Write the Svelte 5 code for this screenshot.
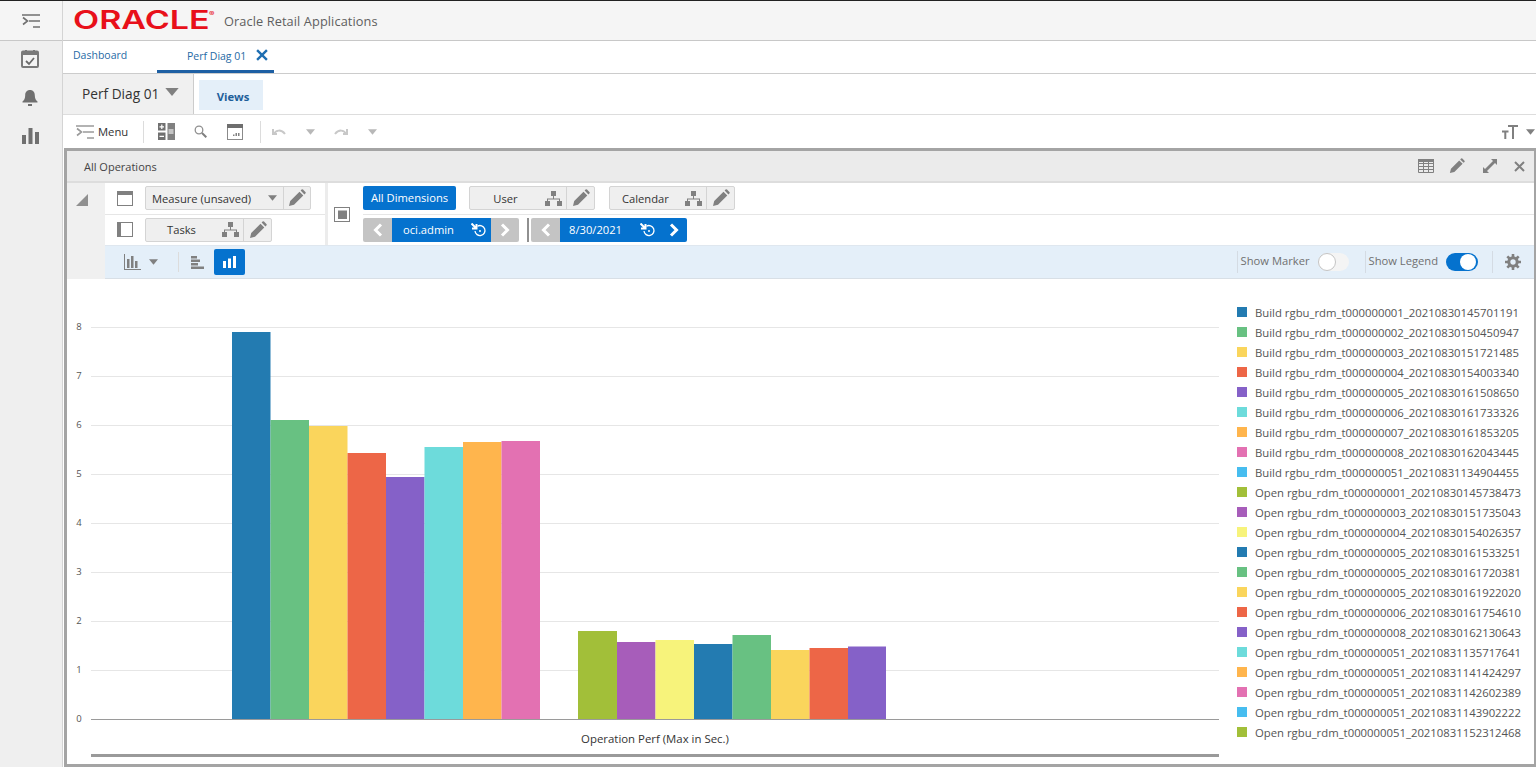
<script>
  const gridLines = [8,7,6,5,4,3,2,1].map((v,i)=>({v, y:327+i*49}));
  const bars = [
    [232,38.5,332,'#237bb1'],[270.5,38.5,420,'#68c182'],[309,38.5,426,'#fad55c'],[347.5,38.5,453,'#ed6647'],
    [386,38.5,477,'#8561c8'],[424.5,38.5,447,'#6ddbdb'],[463,38.5,442,'#ffb54d'],[501.5,38.5,441,'#e371b2'],
    [578,39,631,'#a2bf39'],[617,38.5,642,'#a75dba'],[655.5,38.5,640,'#f7f37b'],[694,38.5,644,'#237bb1'],
    [732.5,38.5,635,'#68c182'],[771,38.5,650,'#fad55c'],[809.5,38.5,648,'#ed6647'],[848,38,646.5,'#8561c8']
  ];
  const legend = [
    ['#237bb1','Build rgbu_rdm_t000000001_20210830145701191'],
    ['#68c182','Build rgbu_rdm_t000000002_20210830150450947'],
    ['#fad55c','Build rgbu_rdm_t000000003_20210830151721485'],
    ['#ed6647','Build rgbu_rdm_t000000004_20210830154003340'],
    ['#8561c8','Build rgbu_rdm_t000000005_20210830161508650'],
    ['#6ddbdb','Build rgbu_rdm_t000000006_20210830161733326'],
    ['#ffb54d','Build rgbu_rdm_t000000007_20210830161853205'],
    ['#e371b2','Build rgbu_rdm_t000000008_20210830162043445'],
    ['#47bdef','Build rgbu_rdm_t000000051_20210831134904455'],
    ['#a2bf39','Open rgbu_rdm_t000000001_20210830145738473'],
    ['#a75dba','Open rgbu_rdm_t000000003_20210830151735043'],
    ['#f7f37b','Open rgbu_rdm_t000000004_20210830154026357'],
    ['#237bb1','Open rgbu_rdm_t000000005_20210830161533251'],
    ['#68c182','Open rgbu_rdm_t000000005_20210830161720381'],
    ['#fad55c','Open rgbu_rdm_t000000005_20210830161922020'],
    ['#ed6647','Open rgbu_rdm_t000000006_20210830161754610'],
    ['#8561c8','Open rgbu_rdm_t000000008_20210830162130643'],
    ['#6ddbdb','Open rgbu_rdm_t000000051_20210831135717641'],
    ['#ffb54d','Open rgbu_rdm_t000000051_20210831141424297'],
    ['#e371b2','Open rgbu_rdm_t000000051_20210831142602389'],
    ['#47bdef','Open rgbu_rdm_t000000051_20210831143902222'],
    ['#a2bf39','Open rgbu_rdm_t000000051_20210831152312468']
  ];
</script>

{#snippet pencil(size = 18, color = '#808080')}
  <svg width={size} height={size} viewBox="0 0 18 18" fill={color}><path d="M1 17l1.2-5L11.5 2.700l3.800 3.800L6 15.800zM12.600 1.600l1-1a1 1 0 0 1 1.400 0l2.400 2.400a1 1 0 0 1 0 1.400l-1 1z"/></svg>
{/snippet}
{#snippet tree()}
  <svg width="17" height="15" viewBox="0 0 17 15" fill="#808080"><rect x="6" y="0" width="5" height="5"/><rect x="0" y="10" width="5" height="5"/><rect x="12" y="10" width="5" height="5"/><path d="M8 5h1v2.500h6V10h-1V8.500H3V10H2V7.500h6z"/></svg>
{/snippet}
{#snippet menuIcon(color)}
  <svg width="18" height="14" viewBox="0 0 18 14" fill="none" stroke={color} stroke-width="1.600"><path d="M0 1h18M7 7h11M11 13h7M1 3.500l4.500 3.500L1 10.500"/></svg>
{/snippet}
{#snippet chevL()}
  <svg width="10" height="14" viewBox="0 0 10 14" fill="none" stroke="#fff" stroke-width="3"><path d="M8 1.500L2.500 7 8 12.500"/></svg>
{/snippet}
{#snippet chevR()}
  <svg width="10" height="14" viewBox="0 0 10 14" fill="none" stroke="#fff" stroke-width="3"><path d="M2 1.500L7.500 7 2 12.500"/></svg>
{/snippet}
{#snippet reset()}
  <svg width="16" height="15" viewBox="0 0 16 15" fill="none" stroke="#fff"><path d="M6.500 3.200A5 5 0 1 1 4 8" stroke-width="1.300"/><circle cx="9" cy="8" r="1" fill="#fff" stroke="none"/><path d="M0.500 0.500L5.500 5.500M1 5.500h4.500V1" stroke-width="2"/></svg>
{/snippet}
{#snippet caret(w = 10, h = 6, color = '#808080')}
  <svg width={w} height={h} viewBox="0 0 10 6" fill={color}><path d="M0 0h10L5 6z"/></svg>
{/snippet}

<div class="page">
  <aside class="rail">
    <div class="rail-top">{@render menuIcon('#707070')}</div>
    <div class="rail-icons">
      <svg width="18" height="18" viewBox="0 0 18 18"><rect x="1" y="1.500" width="16" height="15.500" rx="1" fill="#f4f4f4" stroke="#7a7a7a" stroke-width="2"/><rect x="1" y="1" width="16" height="4" fill="#7a7a7a"/><rect x="4" y="0" width="2" height="2" fill="#7a7a7a"/><rect x="12" y="0" width="2" height="2" fill="#7a7a7a"/><path d="M5 11l3 3 5-6" fill="none" stroke="#6a6a6a" stroke-width="1.800"/></svg>
      <svg width="16" height="18" viewBox="0 0 16 18" fill="#707070"><path d="M8 1c3 0 4.800 2.200 4.800 5.200 0 3.500 1.200 5 2.700 6.300v1H.5v-1C2 11.200 3.200 9.700 3.200 6.200 3.200 3.200 5 1 8 1z"/><rect x="6" y="15" width="4" height="2"/></svg>
      <svg width="17" height="16" viewBox="0 0 17 16" fill="#707070"><rect x="0" y="7" width="4" height="9"/><rect x="6.500" y="0" width="4" height="16"/><rect x="13" y="4" width="4" height="12"/></svg>
    </div>
  </aside>

  <main class="main">
    <header class="brand">
      <span class="logo">ORACLE<sup>®</sup></span>
      <span class="app-name">Oracle Retail Applications</span>
    </header>

    <nav class="tabs">
      <span class="tab">Dashboard</span>
      <span class="tab active">Perf Diag 01
        <svg width="12" height="12" viewBox="0 0 11 11" stroke="#1f6fb2" stroke-width="2.200"><path d="M1 1l9 9M10 1l-9 9"/></svg>
      </span>
    </nav>

    <div class="titlebar">
      <div class="title-cell"><span>Perf Diag 01</span><span class="title-caret">{@render caret(14, 8)}</span></div>
      <div class="views">Views</div>
    </div>

    <div class="toolbar">
      <span class="tool-menu">{@render menuIcon('#9a9a9a')}<span>Menu</span></span>
      <i class="sep"></i>
      <svg class="t-split" width="17" height="17" viewBox="0 0 17 17"><rect x="0" y="0" width="7.500" height="7.500" fill="#707070"/><rect x="0" y="9.500" width="7.500" height="7.500" fill="#707070"/><rect x="9.500" y="0" width="7.500" height="17" fill="#808080"/><rect x="10.500" y="6" width="5" height="5" fill="#c4c4c4"/><path d="M1.500 3.800h4.500M3.800 1.500v4.500M1.500 13.300h4.500" stroke="#fff" stroke-width="1.200"/></svg>
      <svg class="t-search" width="13" height="13" viewBox="0 0 13 13" fill="none"><circle cx="5" cy="5" r="3.800" stroke="#909090" stroke-width="1.300"/><path d="M8 8l4.300 4.300" stroke="#808080" stroke-width="2"/></svg>
      <svg class="t-cal" width="16" height="16" viewBox="0 0 16 16"><rect x=".5" y=".5" width="15" height="15" fill="#fff" stroke="#8a8a8a"/><rect x="0" y="0" width="16" height="4" fill="#6e6e6e"/><path d="M6 12h1.500v-1.500H6zM8.500 12H10V9H8.500zM11 12h1.500V9H11z" fill="#808080"/></svg>
      <i class="sep sep2"></i>
      <svg class="t-undo" width="14" height="8" viewBox="0 0 14 8" fill="none" stroke="#c8c8c8" stroke-width="2"><path d="M2 6c2-4 7-5 11 0"/><path d="M1 1v5h4"/></svg>
      <span class="t-c1">{@render caret(9, 6, '#b8b8b8')}</span>
      <svg class="t-redo" width="14" height="8" viewBox="0 0 14 8" fill="none" stroke="#c8c8c8" stroke-width="2"><path d="M12 6C10 2 5 1 1 6"/><path d="M13 1v5H9"/></svg>
      <span class="t-c2">{@render caret(9, 6, '#b8b8b8')}</span>
      <span class="tool-right">
        <svg width="16" height="14" viewBox="0 0 16 14" fill="none" stroke="#808080"><path d="M0 6.500h6.500M3.300 6.500V14M6 1h10M11 1v13" stroke-width="2"/></svg>
        {@render caret(9, 6, '#808080')}
      </span>
    </div>

    <section class="panel">
      <div class="panel-head">
        <span>All Operations</span>
        <span class="head-icons">
          <svg width="16" height="14" viewBox="0 0 16 14" fill="none" stroke="#808080"><path d="M.5.500h15v13H.5zM.5 4.500h15M.5 7.500h15M.5 10.500h15M5.500 .5v13M10.500 .5v13"/><rect x="0" y="0" width="16" height="3" fill="#808080" stroke="none"/></svg>
          {@render pencil(16)}
          <svg width="16" height="16" viewBox="0 0 16 16" fill="#808080"><path d="M9 1h6v6l-2-2-8 8 2 2H1V9l2 2 8-8z"/></svg>
          <svg width="11" height="11" viewBox="0 0 11 11" stroke="#808080" stroke-width="2"><path d="M1 1l9 9M10 1l-9 9"/></svg>
        </span>
      </div>

      <div class="pov">
        <div class="gutter">
          <svg width="12" height="12" viewBox="0 0 12 12" fill="#909090"><path d="M12 0v12H0z"/></svg>
        </div>
        <div class="pov-main">
          <div class="edges">
            <div class="edge-col">
              <div class="edge-row">
                <svg class="layout-ic" width="16" height="15" viewBox="0 0 16 15"><rect x=".5" y=".5" width="15" height="14" fill="#fff" stroke="#808080"/><rect x="1" y="1" width="14" height="3" fill="#808080"/></svg>
                <div class="chip c-measure"><span class="chip-label">Measure (unsaved)</span><span class="chip-caret">{@render caret(9, 6)}</span><span class="chip-pen">{@render pencil()}</span></div>
              </div>
              <div class="edge-row">
                <svg class="layout-ic" width="16" height="15" viewBox="0 0 16 15"><rect x=".5" y=".5" width="15" height="14" fill="#fff" stroke="#808080"/><rect x="1" y="1" width="3" height="13" fill="#808080"/></svg>
                <div class="chip c-tasks"><span class="chip-label">Tasks</span><span class="chip-tree">{@render tree()}</span><span class="chip-pen">{@render pencil()}</span></div>
              </div>
            </div>
            <div class="center-ic">
              <svg width="16" height="15" viewBox="0 0 16 15"><rect x=".5" y=".5" width="15" height="14" fill="#fff" stroke="#808080"/><rect x="4" y="3.500" width="9" height="8.500" fill="#808080"/></svg>
            </div>
            <div class="edge-col grow">
              <div class="edge-row r2">
                <div class="all-dim">All Dimensions</div>
                <div class="chip c-user"><span class="chip-label">User</span><span class="chip-tree">{@render tree()}</span><span class="chip-pen">{@render pencil()}</span></div>
                <div class="chip c-cal"><span class="chip-label">Calendar</span><span class="chip-tree">{@render tree()}</span><span class="chip-pen">{@render pencil()}</span></div>
              </div>
              <div class="edge-row r2 r3">
                <div class="stepper">
                  <span class="st-btn off lft">{@render chevL()}</span>
                  <span class="st-val w-admin">oci.admin<span class="st-reset">{@render reset()}</span></span>
                  <span class="st-btn off rgt">{@render chevR()}</span>
                </div>
                <i class="st-sep"></i>
                <div class="stepper">
                  <span class="st-btn off lft">{@render chevL()}</span>
                  <span class="st-val w-date">8/30/2021<span class="st-reset">{@render reset()}</span></span>
                  <span class="st-btn on rgt">{@render chevR()}</span>
                </div>
              </div>
            </div>
          </div>

          <div class="chartbar">
            <svg class="ct-ic" width="17" height="16" viewBox="0 0 17 16" fill="#808080"><path d="M0 0h1v15h16v1H0z"/><rect x="3" y="5" width="2.500" height="9"/><rect x="7" y="2" width="2.500" height="12"/><rect x="11" y="7" width="2.500" height="7"/></svg>
            <span class="ct-caret">{@render caret(9, 6)}</span>
            <i class="sep sep3"></i>
            <svg class="ct-h" width="13" height="13" viewBox="0 0 13 13" fill="#808080"><rect x="0" y="0" width="6" height="2.500"/><rect x="0" y="3.500" width="9" height="2.500"/><rect x="0" y="7" width="7" height="2.500"/><rect x="0" y="10.500" width="13" height="2.500"/></svg>
            <span class="ct-on"><svg width="14" height="12" viewBox="0 0 14 12" fill="#fff"><rect x="0" y="5" width="3" height="7"/><rect x="5" y="2.500" width="3" height="9.500"/><rect x="10" y="0" width="3" height="12"/></svg></span>
            <span class="ct-right">
              <i class="sep"></i>
              <span class="ct-lab">Show Marker</span><span class="switch"><i></i></span>
              <i class="sep"></i>
              <span class="ct-lab">Show Legend</span><span class="switch on"><i></i></span>
              <i class="sep"></i>
              <svg class="gear" width="16" height="16" viewBox="0 0 16 16" fill="none" stroke="#808080"><circle cx="8" cy="8" r="4.200" stroke-width="3"/><path d="M8 0v3M8 13v3M0 8h3M13 8h3M2.300 2.300l2.200 2.200M11.500 11.500l2.200 2.200M13.700 2.300l-2.200 2.200M4.500 11.500l-2.200 2.200" stroke-width="2.600"/></svg>
            </span>
          </div>
        </div>
      </div>

      <div class="chart">
        <svg class="plot" width="1170" height="486" viewBox="67 279 1170 486">
          {#each gridLines as g}
            <line x1="91" x2="1219" y1={g.y+.5} y2={g.y+.5} stroke="#e6e6e6"/>
            <text x="79" y={g.y+3} text-anchor="middle" class="tick">{g.v}</text>
          {/each}
          <text x="79" y="722" text-anchor="middle" class="tick">0</text>
          <line x1="91" x2="1219" y1="719.5" y2="719.5" stroke="#9a9a9a"/>
          {#each bars as b}
            <rect x={b[0]} y={b[2]} width={b[1]} height={719-b[2]} fill={b[3]}/>
          {/each}
          <text x="655" y="743" text-anchor="middle" class="axis">Operation Perf (Max in Sec.)</text>
          <rect x="91" y="754" width="1128" height="3" fill="#9a9a9a"/>
        </svg>
        <ul class="legend">
          {#each legend as l}
            <li><i style="background:{l[0]}"></i>{l[1]}</li>
          {/each}
        </ul>
      </div>
    </section>
  </main>
</div>

<style>
  :global(body){margin:0;background:#fff;overflow:hidden}
  .page{display:flex;width:1536px;height:767px;overflow:hidden;font-family:"Open Sans","Noto Sans",sans-serif;color:#333;border-top:1px solid #222;box-sizing:border-box}
  .page i{display:block;font-style:normal}
  svg{display:block;flex:none}
  .rail{width:62px;flex:none;background:#efefef;border-right:1px solid #d4d4d4}
  .rail-top{height:39px;display:flex;align-items:center;justify-content:center;border-bottom:1px solid #c8c8c8;background:#f5f5f5;box-sizing:content-box}
  .rail-icons{display:flex;flex-direction:column;align-items:center;gap:21px;padding:9px 2px 0 0}
  .main{flex:1;min-width:0;display:flex;flex-direction:column}
  .brand{height:39px;flex:none;background:#f5f5f5;border-bottom:1px solid #c8c8c8;display:flex;align-items:center;padding-left:10px}
  .logo{display:inline-block;font-family:"Inter",sans-serif;font-weight:600;font-size:25px;line-height:25px;color:#e8101a;transform:scaleX(1.36);transform-origin:left center;width:151px;position:relative}
  .logo sup{position:absolute;font-size:6px;line-height:6px;left:100px;top:3px;font-weight:400}
  .app-name{font-size:12.750px;color:#5e5e5e;letter-spacing:.1px}
  .tabs{height:32px;flex:none;display:flex;border-bottom:1px solid #ccc;font-size:10.500px;color:#1f6aa5;box-sizing:content-box}
  .tab{padding:7px 0 0 10px;width:94px;box-sizing:border-box}
  .active{width:117px;padding:8px 0 0 30px;border-bottom:3px solid #1d5fa3;display:flex;gap:10px;height:32px}
  .titlebar{height:40px;flex:none;display:flex;border-bottom:1px solid #ddd}
  .title-cell{width:131px;background:#f0f0f0;border-right:1px solid #ccc;display:flex;gap:6px;padding:10px 0 0 19px;box-sizing:border-box;font-size:13.700px;color:#333}
  .title-caret{margin-top:4px}
  .views{width:64px;height:30px;margin:6px 0 0 5px;background:#e4eff9;color:#1f5f9a;font-weight:700;font-size:11.300px;text-align:center;line-height:34px;padding-left:4px;box-sizing:border-box}
  .toolbar{height:33px;flex:none;display:flex;align-items:center;padding-left:13px;font-size:11.250px;color:#333}
  .tool-menu{display:flex;align-items:center;gap:4px;width:67px}
  .sep{width:1px;height:22px;background:#dcdcdc;flex:none}
  .t-split{margin-left:14px}
  .t-search{margin-left:19px}
  .t-cal{margin-left:20px}
  .sep2{margin-left:17px}
  .t-undo{margin-left:11px}
  .t-c1{margin-left:20px}
  .t-redo{margin-left:19px}
  .t-c2{margin-left:20px}
  .tool-right{margin-left:auto;display:flex;align-items:center;gap:8px;padding-right:1px}
  .panel{flex:1;min-height:0;margin:0 0 0 1px;border:3px solid #a4a4a4;border-right-width:2px;border-bottom-width:3px;display:flex;flex-direction:column;background:#fff}
  .panel-head{height:30px;flex:none;background:#ebebeb;border-bottom:2px solid #ddd;display:flex;align-items:center;justify-content:space-between;padding:0 9px 0 17px;font-size:11px;color:#444}
  .head-icons{display:flex;align-items:center;gap:16px}
  .head-icons :global(svg:nth-child(2)){margin-left:-1px;margin-right:1px}
  .pov{display:flex;flex:none}
  .gutter{width:38px;flex:none;background:#f0f0f0;padding:11px 0 0 9px;box-sizing:border-box}
  .pov-main{flex:1;min-width:0}
  .edges{display:flex;height:62px;border-bottom:1px solid #dfe7ef}
  .edge-col{width:220px;flex:none;border-right:3px solid #ececec;display:flex;flex-direction:column}
  .edge-col.grow{flex:1;border-right:0;width:auto}
  .edge-row{flex:1;display:flex;align-items:center;padding-left:12px;gap:12px}
  .edge-row:first-child{border-bottom:1px solid #e6e6e6}
  .edge-row.r2{padding-left:0;gap:13px}
  .edge-row .st-sep+.stepper{margin-left:-11px}
  .center-ic{width:35px;flex:none;display:flex;align-items:center;padding-left:6px;box-sizing:border-box}
  .chip{height:24px;display:flex;align-items:center;background:#efefef;border:1px solid #d4d4d4;border-radius:2px;font-size:11.200px;color:#333;box-sizing:border-box}
  .chip-label{text-align:center}
  .chip-pen{height:100%;width:27px;border-left:1px solid #d4d4d4;display:flex;align-items:center;justify-content:center}
  .c-measure{width:166px}.c-measure .chip-label{padding-left:6px;width:116px;text-align:left;box-sizing:content-box}
  .chip-caret{width:23px;display:flex;justify-content:center}
  .c-tasks{width:127px}.c-tasks .chip-label{width:71px}
  .chip-tree{width:26px;display:flex;justify-content:center}
  .all-dim{width:93px;height:24px;background:#0572ce;color:#fff;font-size:11.200px;line-height:24px;text-align:center;border-radius:2px}
  .c-user{width:126px}.c-user .chip-label{width:72px}
  .c-cal{width:126px;margin-left:1px}.c-cal .chip-label{width:72px}
  .stepper{display:flex;height:24px;border-radius:2px;overflow:hidden}
  .st-btn{width:29px;display:flex;align-items:center;justify-content:center;background:#c4c4c4}
  .st-btn.rgt{width:28px}
  .st-btn.on{background:#0572ce;width:27px}
  .st-val{background:#0572ce;color:#fff;font-size:11.200px;display:flex;align-items:center;position:relative;box-sizing:border-box}
  .st-reset{position:absolute;right:4px;top:5px}
  .w-admin{width:99px;padding-left:11px}
  .w-date{width:100px;padding-left:9px}
  .st-sep{width:2px;height:24px;background:#909090;margin-left:-5px}
  .chartbar{height:32px;background:#e4eff9;display:flex;align-items:center;padding-left:19px;border-bottom:1px solid #d8dfe6}
  .ct-caret{margin-left:8px}
  .sep3{margin-left:20px;height:20px}
  .ct-h{margin-left:12px}
  .ct-on{width:31px;height:26px;margin-left:10px;background:#0572ce;border-radius:2px;display:flex;align-items:center;justify-content:center}
  .ct-right{margin-left:auto;display:flex;align-items:center;padding-right:13px;font-size:11.200px;color:#707070}
  .ct-lab{margin:-3px 0 0 3px}
  .switch{width:31px;height:18px;border-radius:9px;background:#f4f4f4;position:relative;margin:0 16px 0 8px;display:block}
  .switch i{position:absolute;left:0;top:0;width:18px;height:18px;border-radius:50%;background:#fff;border:1px solid #c4c4c4;box-sizing:border-box}
  .switch.on{background:#0572ce;margin-right:14px;width:32px}
  .switch.on i{left:14px;top:1px;width:16px;height:16px;border:0}
  .gear{margin-left:12px}
  .ct-right .sep{height:22px;background:#d4dbe3}
  .chart{flex:1;min-height:0;display:flex;overflow:hidden}
  .plot{width:1170px;height:486px}
  .tick{font-size:9.500px;fill:#555;font-family:"Open Sans",sans-serif}
  .axis{font-size:11.400px;fill:#333;font-family:"Open Sans",sans-serif}
  .legend{list-style:none;margin:0;padding:23px 0 0;font-size:11.330px;color:#555}
  .legend li{height:20px;display:flex;align-items:center;white-space:nowrap}
  .legend li i{width:10px;height:10px;margin-right:8px;flex:none}
</style>
